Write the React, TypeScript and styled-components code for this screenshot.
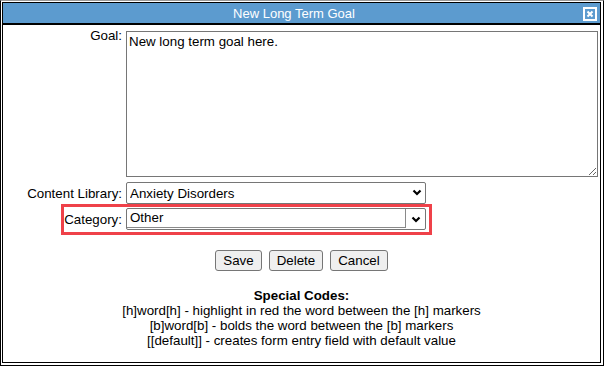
import { FC } from 'react'
import styled, { createGlobalStyle } from 'styled-components'

const GlobalStyle = createGlobalStyle`
  body {
    margin: 0;
    background: #fff;
    font-family: "Liberation Sans", Arial, sans-serif;
    font-size: 13.33px;
    color: #000;
  }
`

const Chevron: FC = () => (
  <svg width="10" height="7" viewBox="0 0 10 7">
    <path d="M1.5 1.5 L5 5 L8.5 1.5" fill="none" stroke="#000" strokeWidth="2.2" />
  </svg>
)

const App: FC = () => {
  return (
    <>
      <GlobalStyle />
      <Frame>
        <Dialog>
          <TitleBar>
            <Title>New Long Term Goal</Title>
            <CloseButton aria-label="close">
              <svg width="8" height="8" viewBox="0 0 8 8">
                <path d="M1.5 1.5 L6.5 6.5 M6.5 1.5 L1.5 6.5" stroke="#fff" strokeWidth="2" />
              </svg>
            </CloseButton>
          </TitleBar>

          <Body>
            <Row $top>
              <Label>Goal:</Label>
              <GoalText defaultValue="New long term goal here." />
            </Row>

            <Row>
              <Label>Content Library:</Label>
              <SelectWrap>
                <Select defaultValue="Anxiety Disorders">
                  <option>Anxiety Disorders</option>
                </Select>
                <SelectArrow>
                  <Chevron />
                </SelectArrow>
              </SelectWrap>
            </Row>

            <HighlightRow>
              <Highlight>
                <Label $width={58}>Category:</Label>
                <Combo>
                  <ComboInput>Other</ComboInput>
                  <ComboArrow>
                    <Chevron />
                  </ComboArrow>
                </Combo>
              </Highlight>
            </HighlightRow>

            <Buttons>
              <Button>Save</Button>
              <Button>Delete</Button>
              <Button>Cancel</Button>
            </Buttons>

            <Codes>
              <CodesTitle>Special Codes:</CodesTitle>
              <div>[h]word[h] - highlight in red the word between the [h] markers</div>
              <div>[b]word[b] - bolds the word between the [b] markers</div>
              <div>[[default]] - creates form entry field with default value</div>
            </Codes>
          </Body>
        </Dialog>
      </Frame>
    </>
  )
}

const Frame = styled.div`
  width: 604px;
  height: 366px;
  box-sizing: border-box;
  border: 1px solid #000;
  border-top-color: #9a9a9a;
  padding: 1px 2px 2px 1px;
`

const Dialog = styled.div`
  height: 100%;
  box-sizing: border-box;
  border: 1px solid #000;
  display: flex;
  flex-direction: column;
  background: #fff;
`

const TitleBar = styled.div`
  height: 20px;
  background: #5c9bcf;
  border-bottom: 2px solid #000;
  display: flex;
  align-items: center;
  padding-right: 3px;
`

const Title = styled.div`
  flex: 1;
  text-align: center;
  color: #fff;
  font-size: 13px;
  padding-left: 2px;
`

const CloseButton = styled.span`
  width: 10px;
  height: 10px;
  border: 2px solid #fff;
  display: flex;
  align-items: center;
  justify-content: center;
  margin-top: 1px;
`

const Body = styled.div`
  display: flex;
  flex-direction: column;
  padding: 3px 2px 0 0;
`

const Row = styled.div<{ $top?: boolean }>`
  display: flex;
  align-items: ${(p) => (p.$top ? 'flex-start' : 'center')};
  gap: 4px;
  margin-bottom: ${(p) => (p.$top ? '5px' : '3px')};
`

const Label = styled.label<{ $width?: number }>`
  width: ${(p) => p.$width ?? 119}px;
  flex: none;
  text-align: right;
  line-height: 15px;
  white-space: nowrap;
`

const GoalText = styled.textarea`
  flex: 1;
  margin: 3px 0 0;
  height: 146px;
  box-sizing: border-box;
  border: 1px solid #767676;
  border-radius: 0;
  padding: 2px 2px;
  font-family: "Liberation Sans", Arial, sans-serif;
  font-size: 13.33px;
  line-height: 15px;
  color: #000;
  resize: vertical;
`

const SelectWrap = styled.div`
  position: relative;
  width: 300px;
  height: 22px;
`

const Select = styled.select`
  appearance: none;
  width: 100%;
  height: 100%;
  box-sizing: border-box;
  border: 1px solid #767676;
  border-radius: 2px;
  background: #fff;
  padding: 0 0 0 3px;
  font-family: "Liberation Sans", Arial, sans-serif;
  font-size: 13.33px;
  color: #000;
`

const SelectArrow = styled.span`
  position: absolute;
  right: 4px;
  top: 7px;
  display: flex;
  pointer-events: none;
`

const HighlightRow = styled.div`
  display: flex;
  padding-left: 61px;
`

const Highlight = styled.div`
  display: flex;
  align-items: center;
  gap: 4px;
  padding: 1px 3px 2px 0;
  outline: 3px solid #ef4149;
`

const Combo = styled.div`
  width: 300px;
  height: 22px;
  box-sizing: border-box;
  border: 1px solid #767676;
  border-radius: 2px;
  display: flex;
`

const ComboInput = styled.div`
  flex: 1;
  border-right: 1px solid #8a8a8a;
  border-bottom: 1px solid #8a8a8a;
  margin-bottom: 1px;
  padding-left: 3px;
  line-height: 18px;
`

const ComboArrow = styled.div`
  width: 19px;
  display: flex;
  align-items: center;
  justify-content: center;
`

const Buttons = styled.div`
  display: flex;
  justify-content: center;
  gap: 7px;
  margin-top: 18px;
  padding-left: 2px;
`

const Button = styled.button`
  height: 21px;
  padding: 0 7px;
  background: #efefef;
  border: 1px solid #767676;
  border-radius: 3px;
  font-family: "Liberation Sans", Arial, sans-serif;
  font-size: 13.33px;
  color: #000;
`

const Codes = styled.div`
  margin-top: 17px;
  text-align: center;
  line-height: 15px;
  padding-left: 2px;
`

const CodesTitle = styled.div`
  font-weight: bold;
`

export default App
